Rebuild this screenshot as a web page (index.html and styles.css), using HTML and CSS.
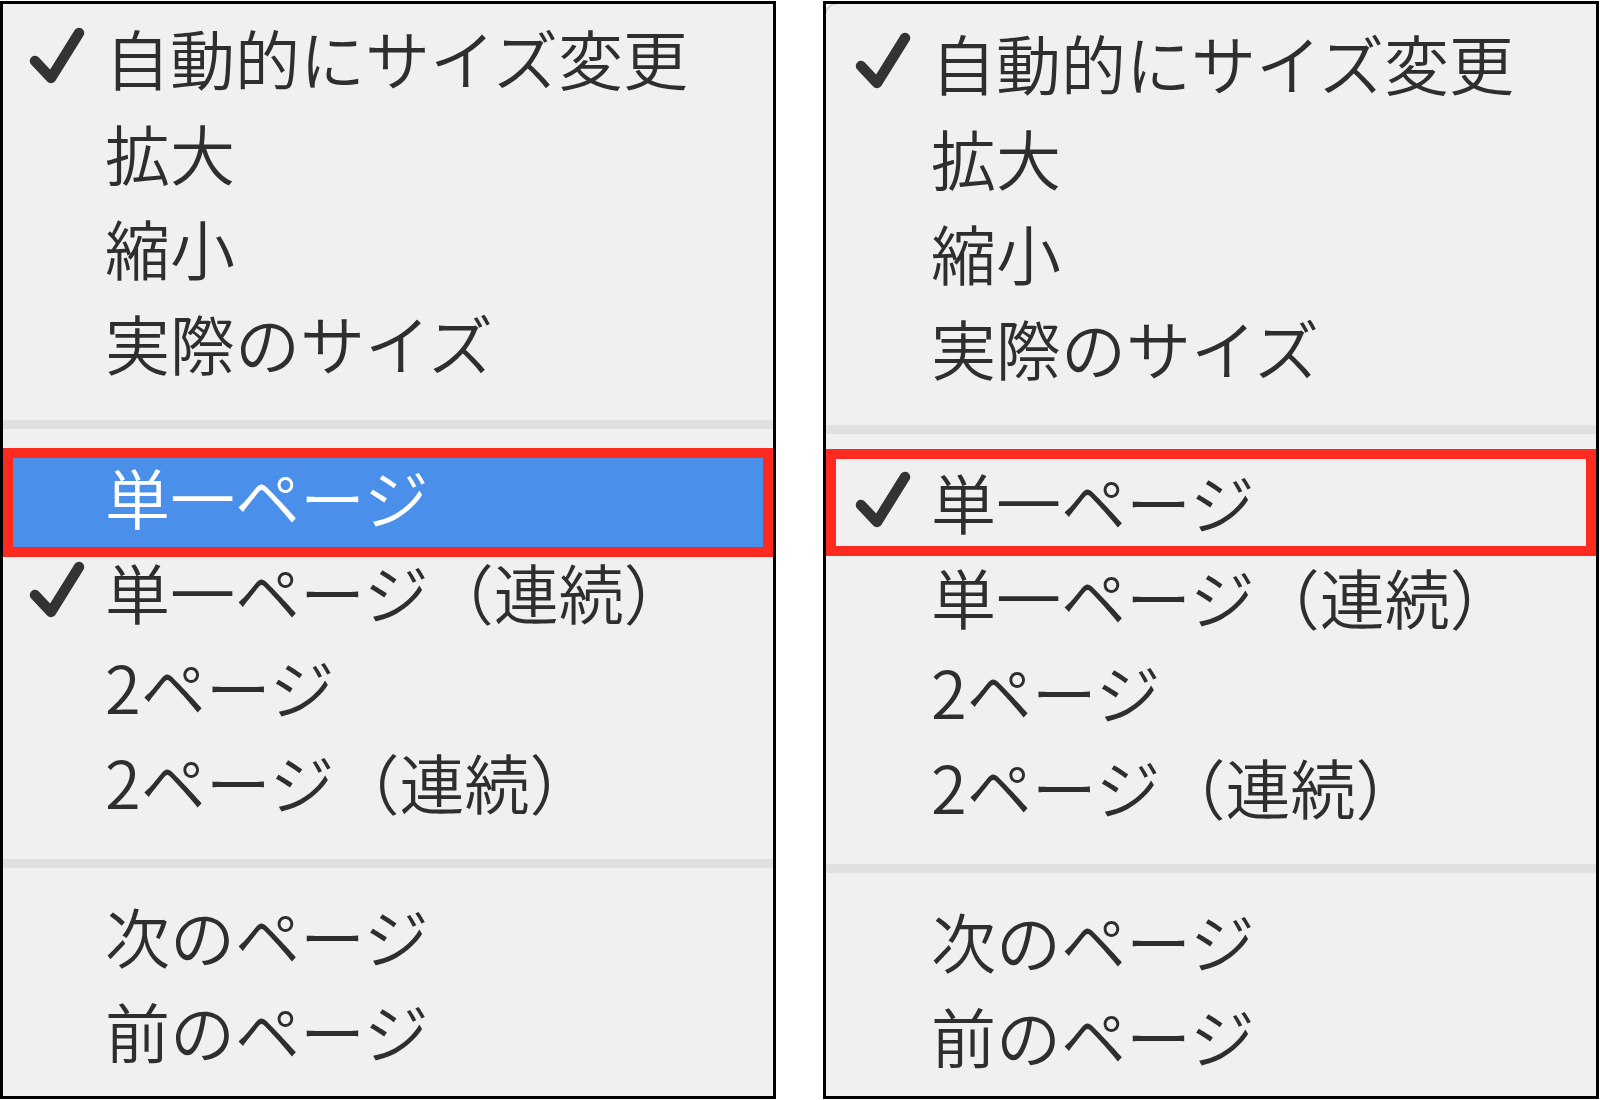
FILE: index.html
```html
<!DOCTYPE html>
<html lang="ja">
<head>
    <meta charset="UTF-8">
    <title>表示メニュー</title>
    <link rel="stylesheet" href="styles.css">
</head>
<body>

<div class="panels">
    <!-- before: hovering "single page" -->
    <div class="panel">
        <ul class="menu">
            <li class="item"><span class="tick"><svg viewBox="0 0 56 56" width="56" height="56"><path d="M5 32 L21 49 L49 4"/></svg></span><span class="label">自動的にサイズ変更</span></li>
            <li class="item"><span class="tick"></span><span class="label">拡大</span></li>
            <li class="item"><span class="tick"></span><span class="label">縮小</span></li>
            <li class="item"><span class="tick"></span><span class="label">実際のサイズ</span></li>
            <li class="sep"></li>
            <li class="item active"><span class="tick"></span><span class="label">単一ページ</span><span class="mark"></span></li>
            <li class="item"><span class="tick"><svg viewBox="0 0 56 56" width="56" height="56"><path d="M5 32 L21 49 L49 4"/></svg></span><span class="label">単一ページ（連続）</span></li>
            <li class="item"><span class="tick"></span><span class="label">2ページ</span></li>
            <li class="item"><span class="tick"></span><span class="label">2ページ（連続）</span></li>
            <li class="sep"></li>
            <li class="item"><span class="tick"></span><span class="label">次のページ</span></li>
            <li class="item"><span class="tick"></span><span class="label">前のページ</span></li>
        </ul>
    </div>

    <!-- after: "single page" is checked -->
    <div class="panel panel-b">
        <ul class="menu">
            <li class="item"><span class="tick"><svg viewBox="0 0 56 56" width="56" height="56"><path d="M5 32 L21 49 L49 4"/></svg></span><span class="label">自動的にサイズ変更</span></li>
            <li class="item"><span class="tick"></span><span class="label">拡大</span></li>
            <li class="item"><span class="tick"></span><span class="label">縮小</span></li>
            <li class="item"><span class="tick"></span><span class="label">実際のサイズ</span></li>
            <li class="sep"></li>
            <li class="item"><span class="tick"><svg viewBox="0 0 56 56" width="56" height="56"><path d="M5 32 L21 49 L49 4"/></svg></span><span class="label">単一ページ</span><span class="mark"></span></li>
            <li class="item"><span class="tick"></span><span class="label">単一ページ（連続）</span></li>
            <li class="item"><span class="tick"></span><span class="label">2ページ</span></li>
            <li class="item"><span class="tick"></span><span class="label">2ページ（連続）</span></li>
            <li class="sep"></li>
            <li class="item"><span class="tick"></span><span class="label">次のページ</span></li>
            <li class="item"><span class="tick"></span><span class="label">前のページ</span></li>
        </ul>
    </div>
</div>

</body>
</html>
```

FILE: styles.css
```css
* {
    box-sizing: border-box;
}
body {
    margin: 0;
    background: #fff;
    font-family: "Noto Sans CJK JP", sans-serif;
    color: #2e2e2e;
}
.panels {
    display: flex;
    gap: 47px;
    padding-top: 1px;
}
.panel {
    width: 776px;
    height: 1098px;
    border: 3px solid #000;
    background: #fff;
}
.menu {
    list-style: none;
    margin: 0;
    padding: 10px 0 0;
    height: 100%;
    background: #f0f0f0;
}
.item {
    position: relative;
    display: flex;
    align-items: center;
    height: 95px;
    padding-left: 27px;
    font-size: 65px;
    font-weight: 350;
}
.tick {
    flex: none;
    width: 56px;
    height: 56px;
    margin-right: 19px;
    margin-bottom: 10px;
}
.tick svg {
    display: block;
    overflow: visible;
}
.tick path {
    fill: none;
    stroke: #333;
    stroke-width: 10.5;
    stroke-linecap: round;
    stroke-linejoin: round;
}
.label {
    line-height: 1;
    padding-bottom: 8px;
    white-space: nowrap;
}
.sep {
    height: 9px;
    margin: 26px 0 24px;
    background: #e0e0e0;
}
.item.active {
    background: #4a8fe9;
    color: #fff;
}
.mark {
    position: absolute;
    left: 0;
    right: 0;
    top: -5px;
    bottom: -9px;
    border: 10px solid #fc2a1f;
}

/* right-hand copy sits a few px lower and has the rounded menu corner */
.panel-b .menu {
    padding-top: 15px;
    border-top-left-radius: 12px;
    box-shadow: -1px -1px 2px rgba(0,0,0,0.25);
}
.panel-b .item {
    padding-left: 30px;
}
.panel-b .mark {
    top: -9px;
    bottom: -3px;
}
```
